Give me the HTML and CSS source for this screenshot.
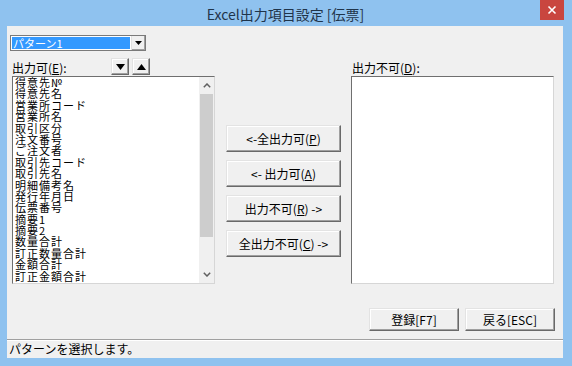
FILE: index.html
```html
<!DOCTYPE html>
<html lang="ja">
<head>
<meta charset="utf-8">
<title>Excel出力項目設定 [伝票]</title>
<link rel="stylesheet" href="styles.css">
</head>
<body>
<div class="window">
  <div class="titlebar">
    <span class="tb-spacer"></span>
    <span class="title">Excel出力項目設定 [伝票]</span>
    <span class="tb-right">
      <span class="close">
        <svg width="10" height="10" viewBox="0 0 10 10"><path d="M1.5 1.5 L8.5 8.5 M8.5 1.5 L1.5 8.5" stroke="#fff" stroke-width="1.6" fill="none"/></svg>
      </span>
    </span>
  </div>
  <div class="client">
    <div class="combo-row">
      <div class="combo">
        <div class="combo-field"><span class="combo-sel">パターン1</span></div>
        <div class="combo-btn">
          <svg width="7" height="4" viewBox="0 0 7 4"><path d="M0 0 H7 L3.5 4 Z" fill="#000"/></svg>
        </div>
      </div>
    </div>

    <div class="main">
      <div class="col">
        <div class="col-head">
          <span class="label">出力可(<u>E</u>):</span>
          <div class="sort-btns">
            <div class="btn sort-btn"><svg width="9" height="6" viewBox="0 0 9 6"><path d="M0 0 H9 L4.5 6 Z" fill="#000"/></svg></div>
            <div class="btn sort-btn"><svg width="9" height="6" viewBox="0 0 9 6"><path d="M0 6 H9 L4.5 0 Z" fill="#000"/></svg></div>
          </div>
        </div>
        <div class="listbox">
          <ul class="items">
            <li>得意先№</li>
            <li>得意先名</li>
            <li>営業所コード</li>
            <li>営業所名</li>
            <li>取引区分</li>
            <li>注文番号</li>
            <li>ご注文者</li>
            <li>取引先コード</li>
            <li>取引先名</li>
            <li>明細備考名</li>
            <li>発行年月日</li>
            <li>伝票番号</li>
            <li>摘要1</li>
            <li>摘要2</li>
            <li>数量合計</li>
            <li>訂正数量合計</li>
            <li>金額合計</li>
            <li>訂正金額合計</li>
          </ul>
          <div class="vscroll">
            <div class="sb-arrow">
              <svg width="8" height="5" viewBox="0 0 8 5"><path d="M0.8 4.2 L4 1 L7.2 4.2" stroke="#606060" stroke-width="1.5" fill="none"/></svg>
            </div>
            <div class="sb-track"><div class="sb-thumb"></div></div>
            <div class="sb-arrow">
              <svg width="8" height="5" viewBox="0 0 8 5"><path d="M0.8 0.8 L4 4 L7.2 0.8" stroke="#606060" stroke-width="1.5" fill="none"/></svg>
            </div>
          </div>
        </div>
      </div>

      <div class="col col-mid">
        <div class="btn move-btn">&lt;-全出力可(<u>P</u>)</div>
        <div class="btn move-btn">&lt;- 出力可(<u>A</u>)</div>
        <div class="btn move-btn">出力不可(<u>R</u>) -&gt;</div>
        <div class="btn move-btn">全出力不可(<u>C</u>) -&gt;</div>
      </div>

      <div class="col">
        <div class="col-head">
          <span class="label label-right">出力不可(<u>D</u>):</span>
        </div>
        <div class="listbox"></div>
      </div>
    </div>

    <div class="action-row">
      <div class="btn action-btn">登録[F7]</div>
      <div class="btn action-btn">戻る[ESC]</div>
    </div>

    <div class="status">パターンを選択します。</div>
  </div>
</div>
</body>
</html>
```

FILE: styles.css
```css
* { box-sizing: border-box; }

html, body {
  margin: 0;
  padding: 0;
  width: 572px;
  height: 366px;
  overflow: hidden;
  background: #8fc2ef;
}

body {
  font-family: "Noto Sans CJK JP", "Noto Sans", sans-serif;
  font-size: 12px;
  color: #000;
}

.window {
  width: 572px;
  height: 366px;
  background: #8fc2ef;
  display: flex;
  flex-direction: column;
  padding: 0 9px 8px 7px;
}

.titlebar {
  height: 26px;
  flex: none;
  display: grid;
  grid-template-columns: 1fr auto 1fr;
  align-items: start;
  margin-right: -1px;
}

.title {
  padding-top: 4px;
  line-height: 20px;
  font-size: 14px;
  color: #1f344a;
  white-space: nowrap;
}

.tb-right {
  display: flex;
  justify-content: flex-end;
}

.close {
  width: 24px;
  height: 20px;
  background: #c9463f;
  display: flex;
  align-items: center;
  justify-content: center;
}

.client {
  flex: 1;
  background: #f0f0f0;
  display: flex;
  flex-direction: column;
}

.combo-row {
  padding: 9px 0 0 3px;
}

.combo {
  width: 136px;
  height: 16px;
  display: flex;
  border: 1px solid #7a7a7a;
  background: #fff;
}

.combo-field {
  flex: 1;
  padding: 1px;
  display: flex;
}

.combo-sel {
  flex: 1;
  height: 12px;
  background: #3399ff;
  color: #fff;
  font-size: 11px;
  line-height: 12px;
  padding-left: 1px;
  white-space: nowrap;
}

.combo-btn {
  width: 14px;
  background: #f0f0f0;
  border-left: 1px solid #e0e0e0;
  box-shadow: inset -1px -1px #a0a0a0;
  display: flex;
  align-items: center;
  justify-content: center;
}

.main {
  margin-top: 7px;
  padding-left: 5px;
  display: grid;
  grid-template-columns: 203px 115px 202px;
  column-gap: 11px;
  height: 226px;
}

.main > .col:last-child {
  margin-left: -1px;
}

.col {
  display: flex;
  flex-direction: column;
}

.col-head {
  height: 18px;
  flex: none;
  display: flex;
  align-items: flex-end;
  justify-content: space-between;
}

.label {
  line-height: 14px;
  padding-bottom: 1px;
  white-space: nowrap;
}

.label-right {
  padding-left: 1px;
}

.sort-btns {
  display: flex;
  gap: 3px;
  margin-right: 65px;
  align-self: flex-start;
}

.btn {
  background: #f0f0f0;
  border: 1px solid;
  border-color: #e3e3e3 #696969 #696969 #e3e3e3;
  box-shadow: inset -1px -1px #a0a0a0, inset 1px 1px #fff;
  display: flex;
  align-items: center;
  justify-content: center;
  white-space: nowrap;
}

.sort-btn {
  width: 18px;
  height: 17px;
}

.listbox {
  height: 208px;
  background: #fff;
  border: 1px solid;
  border-color: #6f6f6f #d6d6d6 #d6d6d6 #6f6f6f;
  display: flex;
}

.items {
  list-style: none;
  margin: 0;
  padding: 0 0 0 2px;
  flex: 1;
  overflow: hidden;
}

.items li {
  line-height: 11.4px;
  height: 11.4px;
  font-size: 11px;
  letter-spacing: 1px;
  white-space: nowrap;
}

.vscroll {
  width: 15px;
  flex: none;
  background: #f0f0f0;
  display: flex;
  flex-direction: column;
}

.sb-arrow {
  height: 17px;
  flex: none;
  display: flex;
  align-items: center;
  justify-content: center;
}

.sb-track {
  flex: 1;
  padding: 0 1px;
}

.sb-thumb {
  height: 143px;
  background: #cdcdcd;
}

.col-mid {
  padding-top: 67px;
  gap: 8px;
}

.move-btn {
  height: 27px;
  font-size: 12px;
}

.action-row {
  margin-top: 24px;
  padding-right: 8px;
  display: flex;
  justify-content: flex-end;
  gap: 6px;
}

.action-btn {
  width: 90px;
  height: 23px;
  font-size: 12px;
}

.status {
  margin-top: auto;
  height: 19px;
  border-top: 1px solid #a0a0a0;
  box-shadow: inset 0 1px #fff;
  padding-left: 2px;
  line-height: 18px;
  font-size: 12px;
  white-space: nowrap;
}
```
